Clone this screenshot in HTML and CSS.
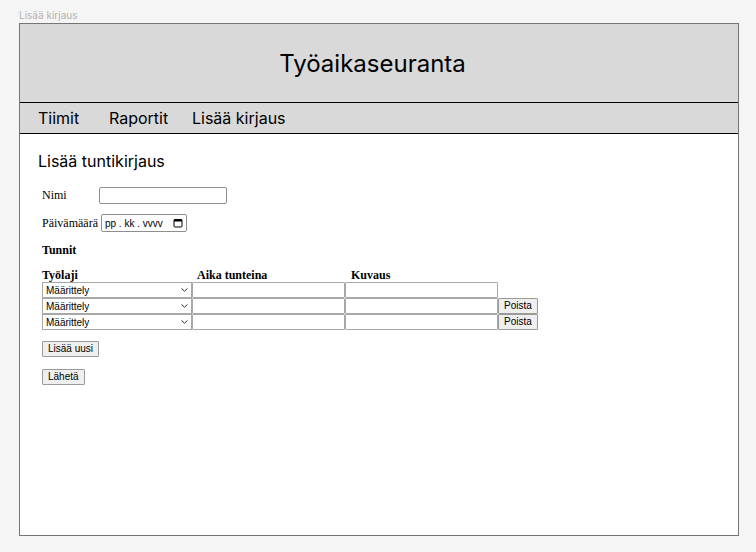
FILE: index.html
```html
<!DOCTYPE html>
<html lang="fi">
<head>
<meta charset="utf-8">
<title>Lisää kirjaus</title>
<link rel="stylesheet" href="styles.css">
</head>
<body>
<div class="frame-label">Lisää kirjaus</div>
<div class="frame">
  <header class="header"><h1 class="title">Työaikaseuranta</h1></header>
  <nav class="nav">
    <a class="nav-item nav-tiimit">Tiimit</a>
    <a class="nav-item nav-raportit">Raportit</a>
    <a class="nav-item">Lisää kirjaus</a>
  </nav>
  <main class="content">
    <h2 class="heading">Lisää tuntikirjaus</h2>
    <form class="form">
      <div class="row row-name">
        <label class="label label-name">Nimi</label>
        <input class="text-input name-input" type="text">
      </div>
      <div class="row row-date">
        <label class="label">Päivämäärä</label>
        <span class="date-input">
          <span class="date-text">pp . kk . vvvv</span>
          <svg class="cal" width="10" height="10" viewBox="0 0 10 10"><rect x="1" y="1.5" width="8" height="7.5" rx="1" fill="none" stroke="#000" stroke-width="1"/><rect x="1" y="1.5" width="8" height="2" fill="#000"/></svg>
        </span>
      </div>
      <div class="section-title">Tunnit</div>
      <div class="hours">
        <div class="hours-head">
          <span class="th th-1">Työlaji</span>
          <span class="th th-2">Aika tunteina</span>
          <span class="th th-3">Kuvaus</span>
        </div>
        <div class="hours-row">
          <span class="select"><span>Määrittely</span><svg width="7" height="4" viewBox="0 0 7 4"><path d="M0.5 0.5 L3.5 3.2 L6.5 0.5" fill="none" stroke="#333" stroke-width="1"/></svg></span>
          <input class="cell-input" type="text">
          <input class="cell-input" type="text">
        </div>
        <div class="hours-row">
          <span class="select"><span>Määrittely</span><svg width="7" height="4" viewBox="0 0 7 4"><path d="M0.5 0.5 L3.5 3.2 L6.5 0.5" fill="none" stroke="#333" stroke-width="1"/></svg></span>
          <input class="cell-input" type="text">
          <input class="cell-input" type="text">
          <button class="btn btn-row" type="button">Poista</button>
        </div>
        <div class="hours-row">
          <span class="select"><span>Määrittely</span><svg width="7" height="4" viewBox="0 0 7 4"><path d="M0.5 0.5 L3.5 3.2 L6.5 0.5" fill="none" stroke="#333" stroke-width="1"/></svg></span>
          <input class="cell-input" type="text">
          <input class="cell-input" type="text">
          <button class="btn btn-row" type="button">Poista</button>
        </div>
      </div>
      <div class="actions">
        <button class="btn" type="button">Lisää uusi</button>
        <button class="btn" type="button">Lähetä</button>
      </div>
    </form>
  </main>
</div>
</body>
</html>
```
FILE: styles.css
```css
* { box-sizing: border-box; }
html, body { margin: 0; padding: 0; }
body {
  background: #f5f5f5;
  padding: 9px 0 0 19px;
  font-family: Inter, "Liberation Sans", sans-serif;
  width: 756px;
  height: 552px;
  overflow: hidden;
}
.frame-label {
  font-size: 10px;
  line-height: 12px;
  height: 14px;
  color: #b3b3b3;
  font-family: Inter, sans-serif;
}
.frame {
  width: 720px;
  height: 513px;
  border: 1px solid #757575;
  background: #fff;
  display: flex;
  flex-direction: column;
}
.header {
  height: 79px;
  background: #d9d9d9;
  border-bottom: 1px solid #000;
  display: flex;
  align-items: center;
  justify-content: center;
}
.title {
  margin: 0;
  font-weight: 400;
  font-size: 24px;
  color: #000;
  padding-right: 13px;
}
.nav {
  height: 31px;
  background: #d9d9d9;
  border-bottom: 1px solid #000;
  display: flex;
  align-items: center;
  padding-left: 18px;
  font-size: 16px;
  color: #000;
}
.nav-item { display: block; }
.nav-tiimit { width: 71px; }
.nav-raportit { width: 83px; }
.content {
  padding: 18px 0 0 18px;
  flex: 1;
}
.heading {
  margin: 0;
  font-weight: 400;
  font-size: 16px;
  line-height: 19px;
  color: #000;
}
.form {
  margin-top: 16px;
  padding-left: 4px;
  font-family: "Liberation Serif", serif;
  font-size: 12px;
  color: #000;
}
.row {
  display: flex;
  align-items: center;
}
.row-name { height: 17px; }
.row-date { height: 18px; margin-top: 10px; }
.label-name { width: 57px; }
.label { white-space: nowrap; }
.text-input {
  height: 17px;
  border: 1px solid #8f8f8f;
  border-radius: 2px;
  background: #fff;
  padding: 0;
  margin: 0;
}
.name-input { width: 128px; }
.date-input {
  margin-left: 3px;
  width: 86px;
  height: 18px;
  border: 1px solid #8f8f8f;
  border-radius: 2px;
  display: flex;
  align-items: center;
  justify-content: space-between;
  padding: 0 3px 0 3px;
  font-family: "Liberation Sans", Arial, sans-serif;
  font-size: 10px;
}
.cal { display: block; }
.section-title {
  font-weight: 700;
  margin-top: 11px;
  line-height: 14px;
}
.hours { margin-top: 11px; }
.hours-head {
  display: flex;
  font-weight: 700;
  line-height: 14px;
  height: 14px;
}
.th-1 { width: 155px; }
.th-2 { width: 154px; }
.hours-row {
  display: flex;
  height: 16px;
}
.select {
  width: 150px;
  height: 16px;
  border: 1px solid #a8a8a8;
  display: flex;
  align-items: center;
  justify-content: space-between;
  padding: 0 3px 0 3px;
  font-family: "Liberation Sans", Arial, sans-serif;
  font-size: 10px;
  background: #fff;
}
.cell-input {
  width: 153px;
  height: 16px;
  border: 1px solid #a8a8a8;
  border-radius: 1px;
  margin: 0;
  padding: 0;
  background: #fff;
}
.btn {
  font-family: "Liberation Sans", Arial, sans-serif;
  font-size: 10px;
  color: #000;
  background: #efefef;
  border: 1px solid #9a9a9a;
  border-radius: 1px;
  height: 16px;
  padding: 0 5px;
  margin: 0;
  line-height: 14px;
}
.btn-row { width: 40px; padding: 0; }
.actions {
  margin-top: 11px;
  display: flex;
  flex-direction: column;
  align-items: flex-start;
  gap: 12px;
}
```
